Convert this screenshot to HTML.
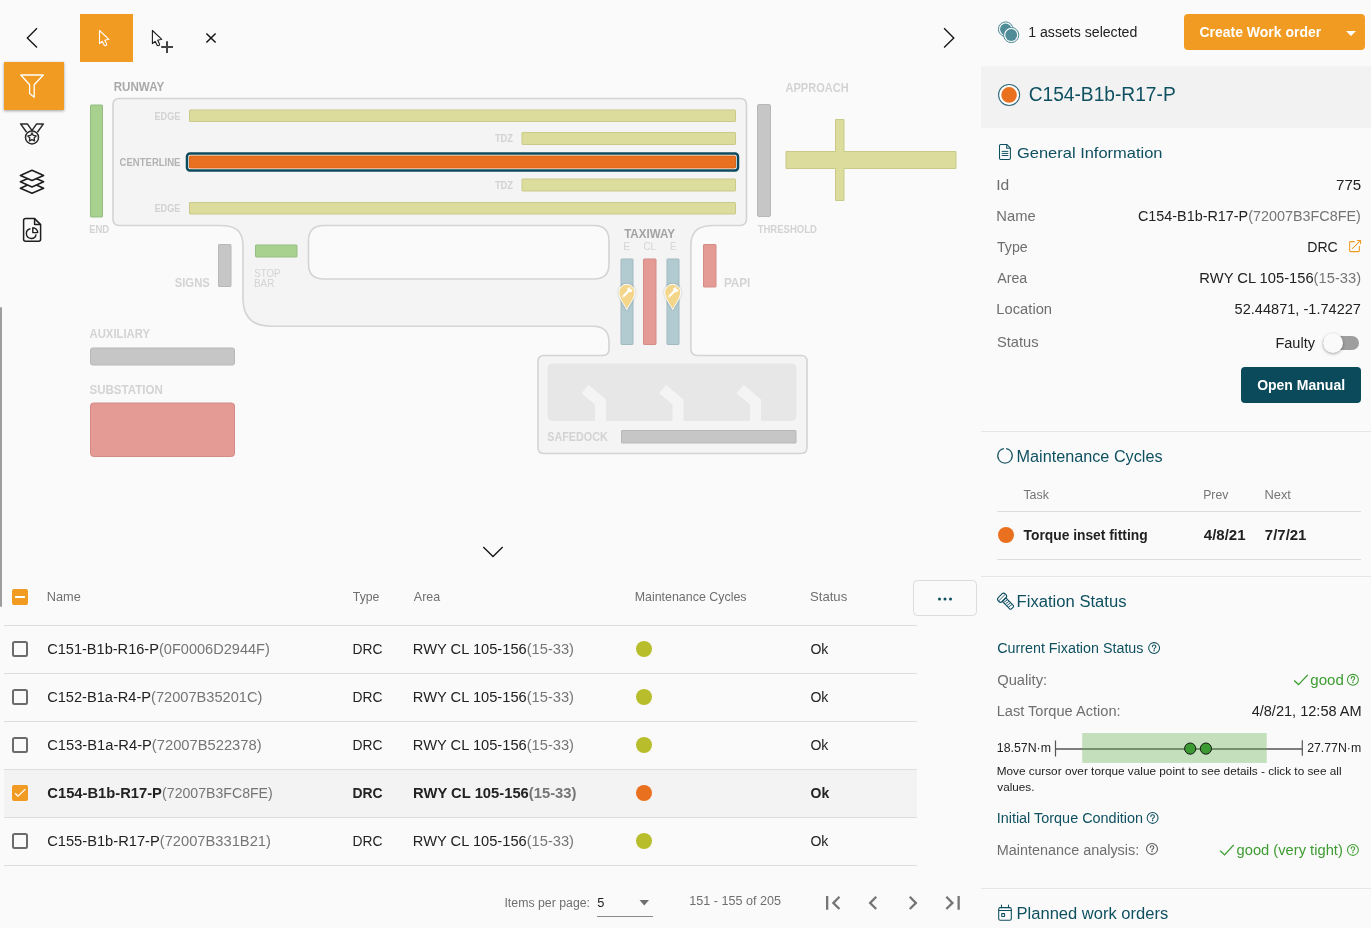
<!DOCTYPE html>
<html><head><meta charset="utf-8">
<style>
html,body{margin:0;padding:0;background:#fafafa;width:1371px;height:928px;overflow:hidden;}
svg{display:block;font-family:"Liberation Sans",sans-serif;}
.sub{fill:#757575;}
</style></head>
<body>
<div style="will-change:transform;width:1371px;height:928px">
<svg width="1371" height="928" viewBox="0 0 1371 928">
<rect x="0" y="0" width="1371" height="928" fill="#fafafa"/>


<!-- ============ LEFT SIDEBAR ============ -->
<path d="M37 28.2 L27.3 37.9 L37 47.6" fill="none" stroke="#151515" stroke-width="1.35"/>
<rect x="4" y="62" width="60" height="48" fill="#f19b22" style="filter:drop-shadow(0 1px 1.5px rgba(0,0,0,.35))"/>
<!-- funnel -->
<path d="M20.8 75 H43.3 L34.2 84.8 V97.2 L29.6 93.6 V84.8 Z" fill="none" stroke="#fff" stroke-width="1.3" stroke-linejoin="round"/>
<!-- medal -->
<g fill="none" stroke="#2a2a2a" stroke-width="1.5" stroke-linejoin="round">
<path d="M26.6 132.2 L20.6 123.9 H27.4 L32 130.6 L36.6 123.9 H43.4 L37.4 132.2"/>
<circle cx="32" cy="137.4" r="6.5"/>
<path d="M32.00 132.90 L33.32 135.48 L36.18 135.94 L34.14 138.00 L34.59 140.86 L32.00 139.55 L29.41 140.86 L29.86 138.00 L27.82 135.94 L30.68 135.48 Z" stroke-width="1.3"/>
</g>
<!-- layers -->
<g fill="#fafafa" stroke="#1e1e1e" stroke-width="1.6" stroke-linejoin="round">
<path d="M32 183.1 L43.6 188.2 L32 193.3 L20.4 188.2 Z"/>
<path d="M32 176.7 L43.6 181.8 L32 186.9 L20.4 181.8 Z"/>
<path d="M32 170.3 L43.6 175.4 L32 180.5 L20.4 175.4 Z"/>
</g>
<!-- doc chart -->
<g fill="none" stroke="#1e1e1e" stroke-width="1.5" stroke-linejoin="round">
<path d="M25.6 218.6 H34.6 L40.6 224.6 V239.2 Q40.6 241.2 38.6 241.2 H25.6 Q23.6 241.2 23.6 239.2 V220.6 Q23.6 218.6 25.6 218.6 Z"/>
<path d="M34.6 218.6 V224.6 H40.6"/>
<path d="M30.45 228.7 A4.9 4.9 0 1 0 36.1 234.3" stroke-width="1.4"/>
<path d="M32.8 227.7 V232.6 H37.7 A4.9 4.9 0 0 0 32.8 227.7 Z" stroke-width="1.4"/>
</g>
<!-- scrollbar -->
<rect x="0" y="307" width="2" height="300" rx="1" fill="#9e9e9e"/>

<!-- ============ TOOLBAR ============ -->
<rect x="80" y="14" width="53" height="48" fill="#f19b22"/>
<path d="M99.5 30.5 V43.6 L102.2 41.3 L104.2 45.2 Q104.8 46 105.6 45.6 L106.3 45.2 Q106.9 44.8 106.6 44.1 L104.8 40.3 L108.9 39.3 Z" fill="none" stroke="#fff" stroke-width="1.1" stroke-linejoin="round"/>
<path d="M152.4 30.5 V43.6 L155.1 41.3 L157.1 45.2 Q157.7 46 158.5 45.6 L159.2 45.2 Q159.8 44.8 159.5 44.1 L157.7 40.3 L161.8 39.3 Z" fill="none" stroke="#1a1a1a" stroke-width="1.1" stroke-linejoin="round"/>
<path d="M167 41.2 V53 M161.2 47 H173" stroke="#444" stroke-width="2"/>
<path d="M206.4 33.4 L215.6 42.6 M215.6 33.4 L206.4 42.6" stroke="#111" stroke-width="1.45"/>
<path d="M944.1 28.2 L953.8 37.9 L944.1 47.6" fill="none" stroke="#151515" stroke-width="1.35"/>

<!-- ============ DIAGRAM ============ -->
<!-- main runway/taxiway shape -->
<path d="M119 98.5 H740 Q746.5 98.5 746.5 105 V219 Q746.5 225.5 740 225.5 H714 C698 225.5 690.9 231 690.9 246 V349 Q690.9 355.5 697.4 355.5 H801 Q807 355.5 807 361.5 V447.5 Q807 453.5 801 453.5 H544 Q538 453.5 538 447.5 V361.5 Q538 355.5 544 355.5 H603 Q609 355.5 609 349 V342 Q609 326.3 593 326.3 H271 Q243 326.3 243 298 V246 C243 231 236 225.5 220 225.5 H119 Q113 225.5 113 219 V105 Q113 98.5 119 98.5 Z" fill="#f4f4f4" stroke="#d4d4d4" stroke-width="1.6"/>
<!-- inner hole -->
<path d="M324 225.5 H594 Q609 225.5 609 241 V264 Q609 279 594 279 H324 Q308.5 279 308.5 264 V241 Q308.5 225.5 324 225.5 Z" fill="#fafafa" stroke="#d4d4d4" stroke-width="1.6"/>

<!-- runway bars -->
<g fill="#dcdc9c" stroke="#c9ca8a" stroke-width="1">
<rect x="189.5" y="110" width="546" height="11.5" rx="0.6"/>
<rect x="522" y="132.5" width="213.5" height="12" rx="0.6"/>
<rect x="522" y="179" width="213.5" height="12" rx="0.6"/>
<rect x="189.5" y="202.5" width="546" height="11.5" rx="0.6"/>
</g>
<rect x="187" y="153.5" width="551" height="17" rx="3" fill="#fff" stroke="#0c4a5b" stroke-width="2.5"/>
<rect x="189.5" y="156" width="546" height="12" rx="0.6" fill="#e8701e" stroke="#d8661a" stroke-width="1"/>
<!-- end bar -->
<rect x="90.5" y="105" width="12" height="112" rx="0.6" fill="#a8d18f" stroke="#95bd82" stroke-width="1"/>
<!-- threshold -->
<rect x="757.5" y="104.5" width="13" height="112" rx="1.5" fill="#c6c6c6" stroke="#b8b8b8" stroke-width="1"/>
<!-- approach -->
<path d="M835.5 119.5 H844 V151.5 H956 V168.5 H844 V200.5 H835.5 V168.5 H786 V151.5 H835.5 Z" fill="#dcdd9c" stroke="#c9ca8a" stroke-width="1"/>
<!-- signs -->
<rect x="218.5" y="244.5" width="12.5" height="42" rx="0.6" fill="#c6c6c6" stroke="#b8b8b8" stroke-width="1"/>
<!-- stop bar -->
<rect x="255.5" y="245" width="41.5" height="12" rx="0.6" fill="#a8d18f" stroke="#95bd82" stroke-width="1"/>
<!-- taxiway bars -->
<rect x="621" y="259" width="12" height="85.5" rx="0.6" fill="#b2cbd0" stroke="#a1b9bf" stroke-width="1"/>
<rect x="643.5" y="259" width="12.5" height="85.5" rx="0.6" fill="#e49a95" stroke="#d48b86" stroke-width="1"/>
<rect x="667" y="259" width="12" height="85.5" rx="0.6" fill="#b2cbd0" stroke="#a1b9bf" stroke-width="1"/>
<!-- papi -->
<rect x="703.5" y="244.5" width="12.5" height="42.5" rx="0.6" fill="#e49a95" stroke="#d48b86" stroke-width="1"/>
<!-- auxiliary -->
<rect x="90.5" y="348" width="144" height="17" rx="2" fill="#c6c6c6" stroke="#b8b8b8" stroke-width="1"/>
<!-- substation -->
<rect x="90.5" y="403" width="144" height="53.5" rx="3" fill="#e49a95" stroke="#d48b86" stroke-width="1"/>
<!-- safedock -->
<rect x="547.5" y="363.5" width="249" height="57.5" rx="5" fill="#e6e7e6"/>
<g fill="none" stroke="#f4f4f4" stroke-width="11" stroke-linejoin="miter">
<path d="M585 389 L600.5 402 V421"/>
<path d="M662.5 389 L678 402 V421"/>
<path d="M740 389 L755.5 402 V421"/>
</g>
<rect x="621.5" y="430.5" width="174.5" height="12.5" rx="0.6" fill="#c6c6c6" stroke="#b8b8b8" stroke-width="1"/>

<!-- pins -->
<g style="filter:drop-shadow(0 0.5px 1.2px rgba(0,0,0,.22))">
<path d="M626.80 309.6 C624.50 304.5 618.80 298.5 618.80 292.3 A8 8 0 0 1 634.80 292.3 C634.80 298.5 629.10 304.5 626.80 309.6 Z" fill="#f4d68a" stroke="#fff" stroke-width="1"/>
<path d="M672.70 309.6 C670.40 304.5 664.70 298.5 664.70 292.3 A8 8 0 0 1 680.70 292.3 C680.70 298.5 675.00 304.5 672.70 309.6 Z" fill="#f4d68a" stroke="#fff" stroke-width="1"/>
</g>
<path d="M623.20 296.4 L628.40 291.2" stroke="#fff" stroke-width="2.1" stroke-linecap="round"/>
<circle cx="629.80" cy="289.8" r="2.5" fill="#fff"/>
<circle cx="631.20" cy="288.3" r="1.15" fill="#f4d68a"/>
<circle cx="623.30" cy="296.3" r="0.5" fill="#f4d68a"/>
<path d="M669.10 296.4 L674.30 291.2" stroke="#fff" stroke-width="2.1" stroke-linecap="round"/>
<circle cx="675.70" cy="289.8" r="2.5" fill="#fff"/>
<circle cx="677.10" cy="288.3" r="1.15" fill="#f4d68a"/>
<circle cx="669.20" cy="296.3" r="0.5" fill="#f4d68a"/>

<!-- diagram labels -->

<!-- down chevron -->
<path d="M483.3 547 L493 556.5 L502.7 547" fill="none" stroke="#151515" stroke-width="1.35"/>

<!-- ============ TABLE ============ -->
<rect x="12" y="589" width="16" height="16" rx="2" fill="#f19b22"/>
<rect x="15" y="596" width="10" height="2" fill="#fff"/>
<rect x="913.5" y="580.5" width="63" height="35" rx="4" fill="#fafafa" stroke="#dcdcdc" stroke-width="1"/>
<g fill="#0e4f5f"><circle cx="939.5" cy="599" r="1.5"/><circle cx="945" cy="599" r="1.5"/><circle cx="950.5" cy="599" r="1.5"/></g>

<g stroke="#dedede" stroke-width="1">
<line x1="4" y1="625.5" x2="917" y2="625.5"/>
<line x1="4" y1="673.5" x2="917" y2="673.5"/>
<line x1="4" y1="721.5" x2="917" y2="721.5"/>
<line x1="4" y1="817.5" x2="917" y2="817.5"/>
<line x1="4" y1="865.5" x2="917" y2="865.5"/>
</g>
<rect x="4" y="770" width="913" height="47" fill="#f3f3f3"/>
<line x1="4" y1="769.5" x2="917" y2="769.5" stroke="#dedede" stroke-width="1"/>

<g fill="none" stroke="#6b6b6b" stroke-width="2">
<rect x="13" y="642" width="14" height="14" rx="1.5"/>
<rect x="13" y="690" width="14" height="14" rx="1.5"/>
<rect x="13" y="738" width="14" height="14" rx="1.5"/>
<rect x="13" y="834" width="14" height="14" rx="1.5"/>
</g>
<rect x="12" y="785" width="16" height="16" rx="2" fill="#f19b22"/>
<path d="M15.1 793.3 L17.9 796.2 L25.4 789.1" fill="none" stroke="#fff" stroke-width="1.3"/>

<g fill="#b8bd2b">
<circle cx="644" cy="649" r="8"/>
<circle cx="644" cy="697" r="8"/>
<circle cx="644" cy="745" r="8"/>
<circle cx="644" cy="841" r="8"/>
</g>
<circle cx="644" cy="793" r="8" fill="#e8701e"/>

<!-- pagination -->
<line x1="597" y1="916.5" x2="653" y2="916.5" stroke="#8a8a8a" stroke-width="1"/>
<path d="M639.5 900 H649 L644.25 905.5 Z" fill="#6f6f6f"/>
<g fill="#757575">
<path transform="translate(819.1 889.1) scale(1.15)" d="M18.41 16.59L13.82 12l4.59-4.59L17 6l-6 6 6 6zM6 6h2v12H6z"/>
<path transform="translate(859.3 889.1) scale(1.15)" d="M15.41 7.41L14 6l-6 6 6 6 1.41-1.41L10.83 12z"/>
<path transform="translate(899.1 889.1) scale(1.15)" d="M10 6L8.59 7.41 13.17 12l-4.58 4.59L10 18l6-6z"/>
<path transform="translate(939.1 889.1) scale(1.15)" d="M5.59 7.41L10.18 12l-4.59 4.59L7 18l6-6-6-6zM16 6h2v12h-2z"/>
</g>

<!-- ============ RIGHT PANEL ============ -->
<!-- assets icon -->
<g stroke="#4f8c98" stroke-width="1" >
<circle cx="1005.7" cy="29.2" r="7.3" fill="#fafafa"/>
<circle cx="1005.7" cy="29.2" r="5.6" fill="#4f8c98" stroke="none"/>
<circle cx="1011.2" cy="35" r="7.6" fill="#fafafa"/>
<circle cx="1011.2" cy="35" r="5.9" fill="#4f8c98" stroke="none"/>
</g>
<rect x="1184" y="14" width="181" height="36" rx="4" fill="#f19b22"/>
<path d="M1346 31 H1356 L1351 36 Z" fill="#fff"/>

<rect x="981" y="66" width="390" height="62" fill="#f2f2f2"/>
<circle cx="1009.1" cy="94.9" r="10.5" fill="#fff" stroke="#2f6878" stroke-width="1.05"/>
<circle cx="1009.1" cy="94.9" r="7.8" fill="#e8701e"/>

<!-- general info -->
<g fill="none" stroke="#0e4f5f" stroke-width="1.05" stroke-linejoin="round">
<path d="M1000.7 144.4 H1006.7 L1010.4 148.1 V158.2 Q1010.4 159.4 1009.2 159.4 H1000.7 Q999.5 159.4 999.5 158.2 V145.6 Q999.5 144.4 1000.7 144.4 Z"/>
<path d="M1006.7 144.4 V148.3 H1010.4"/>
<path d="M1002.1 151.4 H1007.9 M1002.1 153.45 H1007.9 M1002.1 155.5 H1007.9" stroke-width="0.95" stroke-linecap="round"/>
</g>

<g fill="none" stroke="#f09a24" stroke-width="1.05" stroke-linecap="round" stroke-linejoin="round">
<path d="M1354.4 241.6 H1350.6 Q1349.6 241.6 1349.6 242.6 V250.6 Q1349.6 251.6 1350.6 251.6 H1358.4 Q1359.4 251.6 1359.4 250.6 V246.3"/>
<path d="M1352.5 248.5 L1360.4 240.6 M1357.4 240.4 H1360.6 V243.6"/>
</g>
<rect x="1323" y="336" width="36" height="14" rx="7" fill="#9e9e9e"/>
<circle cx="1333" cy="343" r="10" fill="#fafafa" style="filter:drop-shadow(0 1px 1.5px rgba(0,0,0,.35))"/>
<rect x="1241" y="367" width="120" height="36" rx="4" fill="#0b4a5a"/>

<line x1="981" y1="431.5" x2="1371" y2="431.5" stroke="#e6e6e6" stroke-width="1"/>

<!-- maintenance cycles -->
<path d="M1006.10 448.63 A7.25 7.25 0 1 1 1003.90 448.63" fill="none" stroke="#1f5a69" stroke-width="1.25"/>
<line x1="997" y1="511.5" x2="1361" y2="511.5" stroke="#dcdcdc" stroke-width="1"/>
<circle cx="1006" cy="535" r="8" fill="#e8701e"/>
<line x1="997" y1="559.5" x2="1361" y2="559.5" stroke="#dcdcdc" stroke-width="1"/>
<line x1="981" y1="576.5" x2="1371" y2="576.5" stroke="#e6e6e6" stroke-width="1"/>

<!-- fixation status -->
<g transform="translate(1002.3 597.9) rotate(45)" fill="none" stroke="#0e4f5f" stroke-width="1.1" stroke-linejoin="round">
<rect x="-3.1" y="-4.9" width="5.6" height="9.8" rx="2.3"/>
<path d="M-0.4 -4.6 V4.6" stroke-width="0.8"/>
<path d="M2.5 -2.5 H13 Q14.2 -2.5 14.2 -1.3 V1.3 Q14.2 2.5 13 2.5 H2.5 Z"/>
<path d="M5 -2.3 L4.2 2.3 M7.2 -2.3 L6.4 2.3 M9.4 -2.3 L8.6 2.3 M11.6 -2.3 L10.8 2.3" stroke-width="0.8"/>
</g>


<line x1="1055.5" y1="749" x2="1302" y2="749" stroke="#555" stroke-width="1.3"/>
<rect x="1082.2" y="733" width="184.5" height="29.9" fill="rgb(99,176,77)" fill-opacity="0.364"/>
<line x1="1055.5" y1="740.5" x2="1055.5" y2="756.5" stroke="#555" stroke-width="1.2"/>
<line x1="1302.3" y1="740.3" x2="1302.3" y2="755.8" stroke="#555" stroke-width="1.2"/>
<circle cx="1190.2" cy="748.6" r="5.6" fill="#3c9b32" stroke="#151515" stroke-width="1"/>
<circle cx="1205.9" cy="748.6" r="5.6" fill="#3c9b32" stroke="#151515" stroke-width="1"/>



<g fill="none" stroke="#0e5060" stroke-width="1.05">
<circle cx="1154.1" cy="648.1" r="5.45"/>
<path d="M1152.35 646.80 Q1152.35 644.90 1154.10 644.90 Q1155.90 644.90 1155.90 646.60 Q1155.90 647.70 1154.50 648.40 Q1154.10 648.60 1154.10 649.20" stroke-linecap="round"/>
</g>
<circle cx="1154.1" cy="650.70" r="0.75" fill="#0e5060"/>
<g fill="none" stroke="#3c9c30" stroke-width="1.05">
<circle cx="1352.9" cy="679.8" r="5.45"/>
<path d="M1351.15 678.50 Q1351.15 676.60 1352.90 676.60 Q1354.70 676.60 1354.70 678.30 Q1354.70 679.40 1353.30 680.10 Q1352.90 680.30 1352.90 680.90" stroke-linecap="round"/>
</g>
<circle cx="1352.9" cy="682.40" r="0.75" fill="#3c9c30"/>
<g fill="none" stroke="#0e5060" stroke-width="1.05">
<circle cx="1152.6" cy="817.9" r="5.45"/>
<path d="M1150.85 816.60 Q1150.85 814.70 1152.60 814.70 Q1154.40 814.70 1154.40 816.40 Q1154.40 817.50 1153.00 818.20 Q1152.60 818.40 1152.60 819.00" stroke-linecap="round"/>
</g>
<circle cx="1152.6" cy="820.50" r="0.75" fill="#0e5060"/>
<g fill="none" stroke="#555" stroke-width="1.05">
<circle cx="1152.0" cy="848.9" r="5.45"/>
<path d="M1150.25 847.60 Q1150.25 845.70 1152.00 845.70 Q1153.80 845.70 1153.80 847.40 Q1153.80 848.50 1152.40 849.20 Q1152.00 849.40 1152.00 850.00" stroke-linecap="round"/>
</g>
<circle cx="1152.0" cy="851.50" r="0.75" fill="#555"/>
<g fill="none" stroke="#3c9c30" stroke-width="1.05">
<circle cx="1352.9" cy="849.9" r="5.45"/>
<path d="M1351.15 848.60 Q1351.15 846.70 1352.90 846.70 Q1354.70 846.70 1354.70 848.40 Q1354.70 849.50 1353.30 850.20 Q1352.90 850.40 1352.90 851.00" stroke-linecap="round"/>
</g>
<circle cx="1352.9" cy="852.50" r="0.75" fill="#3c9c30"/>
<path d="M1294.2 680.5 L1298.5 684.6 L1307.8 674.9" fill="none" stroke="#3c9c30" stroke-width="1.35"/>
<path d="M1220.2 850.8 L1224.6 854.9 L1233.7 844.9" fill="none" stroke="#3c9c30" stroke-width="1.35"/>
<line x1="981" y1="888.5" x2="1371" y2="888.5" stroke="#e6e6e6" stroke-width="1"/>
<!-- calendar -->
<g fill="none" stroke="#0e4f5f" stroke-width="1.05">
<rect x="998.7" y="907.6" width="12.6" height="12.7" rx="1.6"/>
<path d="M998.7 910.5 H1011.3 M1001.5 905.1 V907.6 M1008.5 905.1 V907.6" stroke-linecap="round"/>
<rect x="1001.7" y="913.6" width="2.9" height="2.9" rx="0.3"/>
</g>


<text x="113.72" y="91.20" font-size="11.93" font-weight="bold" fill="#a9a9a9" textLength="50.49" lengthAdjust="spacingAndGlyphs">RUNWAY</text>
<text x="154.48" y="119.70" font-size="10.76" font-weight="bold" fill="#d3d3d3" textLength="25.98" lengthAdjust="spacingAndGlyphs">EDGE</text>
<text x="119.62" y="165.90" font-size="10.47" font-weight="bold" fill="#b3b3b3" textLength="60.86" lengthAdjust="spacingAndGlyphs">CENTERLINE</text>
<text x="154.48" y="211.90" font-size="10.76" font-weight="bold" fill="#d3d3d3" textLength="25.98" lengthAdjust="spacingAndGlyphs">EDGE</text>
<text x="494.91" y="142.40" font-size="11.05" font-weight="bold" fill="#d3d3d3" textLength="18.16" lengthAdjust="spacingAndGlyphs">TDZ</text>
<text x="494.91" y="189.00" font-size="11.05" font-weight="bold" fill="#d3d3d3" textLength="18.16" lengthAdjust="spacingAndGlyphs">TDZ</text>
<text x="89.16" y="233.00" font-size="10.62" font-weight="bold" fill="#d3d3d3" textLength="20.03" lengthAdjust="spacingAndGlyphs">END</text>
<text x="785.52" y="92.00" font-size="12.80" font-weight="bold" fill="#d3d3d3" textLength="63.22" lengthAdjust="spacingAndGlyphs">APPROACH</text>
<text x="757.71" y="233.40" font-size="11.20" font-weight="bold" fill="#d3d3d3" textLength="59.10" lengthAdjust="spacingAndGlyphs">THRESHOLD</text>
<text x="624.18" y="237.60" font-size="12.65" font-weight="bold" fill="#a3a3a3" textLength="50.72" lengthAdjust="spacingAndGlyphs">TAXIWAY</text>
<text x="623.35" y="250.10" font-size="10.47" fill="#d5d5d5" textLength="6.89" lengthAdjust="spacingAndGlyphs">E</text>
<text x="643.41" y="250.10" font-size="10.47" fill="#d5d5d5" textLength="12.52" lengthAdjust="spacingAndGlyphs">CL</text>
<text x="669.94" y="250.10" font-size="10.47" fill="#d5d5d5" textLength="6.15" lengthAdjust="spacingAndGlyphs">E</text>
<text x="174.66" y="287.00" font-size="13.24" font-weight="bold" fill="#d3d3d3" textLength="35.18" lengthAdjust="spacingAndGlyphs">SIGNS</text>
<text x="254.26" y="276.90" font-size="11.49" fill="#d3d3d3" textLength="26.24" lengthAdjust="spacingAndGlyphs">STOP</text>
<text x="253.88" y="286.50" font-size="10.47" fill="#d3d3d3" textLength="20.48" lengthAdjust="spacingAndGlyphs">BAR</text>
<text x="723.91" y="287.00" font-size="11.93" font-weight="bold" fill="#d3d3d3" textLength="26.37" lengthAdjust="spacingAndGlyphs">PAPI</text>
<text x="89.52" y="338.20" font-size="13.38" font-weight="bold" fill="#d3d3d3" textLength="60.58" lengthAdjust="spacingAndGlyphs">AUXILIARY</text>
<text x="89.45" y="394.30" font-size="13.24" font-weight="bold" fill="#d3d3d3" textLength="73.32" lengthAdjust="spacingAndGlyphs">SUBSTATION</text>
<text x="547.18" y="441.10" font-size="12.65" font-weight="bold" fill="#d3d3d3" textLength="60.72" lengthAdjust="spacingAndGlyphs">SAFEDOCK</text>
<text x="46.75" y="601.00" font-size="13.09" fill="#6f6f6f" textLength="34.10" lengthAdjust="spacingAndGlyphs">Name</text>
<text x="352.82" y="600.90" font-size="12.95" fill="#6f6f6f" textLength="26.60" lengthAdjust="spacingAndGlyphs">Type</text>
<text x="413.87" y="600.90" font-size="12.95" fill="#6f6f6f" textLength="26.33" lengthAdjust="spacingAndGlyphs">Area</text>
<text x="634.68" y="600.90" font-size="12.36" fill="#6f6f6f" textLength="111.86" lengthAdjust="spacingAndGlyphs">Maintenance Cycles</text>
<text x="810.01" y="601.00" font-size="13.24" fill="#6f6f6f" textLength="37.25" lengthAdjust="spacingAndGlyphs">Status</text>
<text x="47.17" y="653.80" font-size="14.62" fill="#222" textLength="222.72" lengthAdjust="spacingAndGlyphs">C151-B1b-R16-P<tspan class="sub">(0F0006D2944F)</tspan></text>
<text x="352.61" y="653.80" font-size="14.62" fill="#222" textLength="29.95" lengthAdjust="spacingAndGlyphs">DRC</text>
<text x="412.89" y="653.80" font-size="14.62" fill="#222" textLength="161.09" lengthAdjust="spacingAndGlyphs">RWY CL 105-156<tspan class="sub">(15-33)</tspan></text>
<text x="810.43" y="653.80" font-size="14.41" fill="#222" textLength="17.97" lengthAdjust="spacingAndGlyphs">Ok</text>
<text x="47.17" y="701.80" font-size="14.62" fill="#222" textLength="215.23" lengthAdjust="spacingAndGlyphs">C152-B1a-R4-P<tspan class="sub">(72007B35201C)</tspan></text>
<text x="352.61" y="701.80" font-size="14.62" fill="#222" textLength="29.95" lengthAdjust="spacingAndGlyphs">DRC</text>
<text x="412.89" y="701.80" font-size="14.62" fill="#222" textLength="161.09" lengthAdjust="spacingAndGlyphs">RWY CL 105-156<tspan class="sub">(15-33)</tspan></text>
<text x="810.43" y="701.80" font-size="14.41" fill="#222" textLength="17.97" lengthAdjust="spacingAndGlyphs">Ok</text>
<text x="47.16" y="749.80" font-size="14.62" fill="#222" textLength="214.42" lengthAdjust="spacingAndGlyphs">C153-B1a-R4-P<tspan class="sub">(72007B522378)</tspan></text>
<text x="352.61" y="749.80" font-size="14.62" fill="#222" textLength="29.95" lengthAdjust="spacingAndGlyphs">DRC</text>
<text x="412.89" y="749.80" font-size="14.62" fill="#222" textLength="161.09" lengthAdjust="spacingAndGlyphs">RWY CL 105-156<tspan class="sub">(15-33)</tspan></text>
<text x="810.43" y="749.80" font-size="14.41" fill="#222" textLength="17.97" lengthAdjust="spacingAndGlyphs">Ok</text>
<text x="47.31" y="797.80" font-size="14.62" font-weight="bold" fill="#222" textLength="114.61" lengthAdjust="spacingAndGlyphs">C154-B1b-R17-P</text>
<text x="162.12" y="797.80" font-size="14.62" fill="#757575" textLength="110.62" lengthAdjust="spacingAndGlyphs">(72007B3FC8FE)</text>
<text x="352.56" y="797.80" font-size="14.62" font-weight="bold" fill="#222" textLength="30.11" lengthAdjust="spacingAndGlyphs">DRC</text>
<text x="413.10" y="797.80" font-size="14.62" font-weight="bold" fill="#222" textLength="163.36" lengthAdjust="spacingAndGlyphs">RWY CL 105-156<tspan class="sub">(15-33)</tspan></text>
<text x="810.54" y="797.80" font-size="14.41" font-weight="bold" fill="#222" textLength="18.65" lengthAdjust="spacingAndGlyphs">Ok</text>
<text x="47.17" y="845.80" font-size="14.62" fill="#222" textLength="223.71" lengthAdjust="spacingAndGlyphs">C155-B1b-R17-P<tspan class="sub">(72007B331B21)</tspan></text>
<text x="352.61" y="845.80" font-size="14.62" fill="#222" textLength="29.95" lengthAdjust="spacingAndGlyphs">DRC</text>
<text x="412.89" y="845.80" font-size="14.62" fill="#222" textLength="161.09" lengthAdjust="spacingAndGlyphs">RWY CL 105-156<tspan class="sub">(15-33)</tspan></text>
<text x="810.43" y="845.80" font-size="14.41" fill="#222" textLength="17.97" lengthAdjust="spacingAndGlyphs">Ok</text>
<text x="504.46" y="906.90" font-size="13.09" fill="#6f6f6f" textLength="85.56" lengthAdjust="spacingAndGlyphs">Items per page:</text>
<text x="597.29" y="906.90" font-size="12.51" fill="#222" textLength="7.14" lengthAdjust="spacingAndGlyphs">5</text>
<text x="689.25" y="905.30" font-size="12.36" fill="#6f6f6f" textLength="91.87" lengthAdjust="spacingAndGlyphs">151 - 155 of 205</text>
<text x="1028.24" y="37.20" font-size="14.84" fill="#222" textLength="109.07" lengthAdjust="spacingAndGlyphs">1 assets selected</text>
<text x="1199.44" y="37.00" font-size="14.84" font-weight="bold" fill="#fff" textLength="121.76" lengthAdjust="spacingAndGlyphs">Create Work order</text>
<text x="1028.64" y="101.00" font-size="19.64" fill="#0e5060" textLength="147.08" lengthAdjust="spacingAndGlyphs">C154-B1b-R17-P</text>
<text x="1016.98" y="157.60" font-size="15.42" fill="#0e5060" textLength="145.56" lengthAdjust="spacingAndGlyphs">General Information</text>
<text x="996.15" y="190.10" font-size="15.13" fill="#6f6f6f" textLength="13.05" lengthAdjust="spacingAndGlyphs">Id</text>
<text x="996.38" y="220.90" font-size="14.40" fill="#6f6f6f" textLength="39.34" lengthAdjust="spacingAndGlyphs">Name</text>
<text x="996.98" y="252.20" font-size="14.84" fill="#6f6f6f" textLength="30.73" lengthAdjust="spacingAndGlyphs">Type</text>
<text x="997.26" y="283.10" font-size="14.69" fill="#6f6f6f" textLength="30.03" lengthAdjust="spacingAndGlyphs">Area</text>
<text x="996.39" y="314.20" font-size="14.69" fill="#6f6f6f" textLength="55.65" lengthAdjust="spacingAndGlyphs">Location</text>
<text x="996.94" y="347.20" font-size="14.40" fill="#6f6f6f" textLength="41.57" lengthAdjust="spacingAndGlyphs">Status</text>
<text x="1336.05" y="190.20" font-size="14.98" fill="#222" textLength="25.17" lengthAdjust="spacingAndGlyphs">775</text>
<text x="1137.98" y="220.90" font-size="14.55" fill="#222" textLength="222.88" lengthAdjust="spacingAndGlyphs">C154-B1b-R17-P<tspan class="sub">(72007B3FC8FE)</tspan></text>
<text x="1307.24" y="252.00" font-size="14.55" fill="#222" textLength="30.47" lengthAdjust="spacingAndGlyphs">DRC</text>
<text x="1199.39" y="282.90" font-size="14.55" fill="#222" textLength="161.70" lengthAdjust="spacingAndGlyphs">RWY CL 105-156<tspan class="sub">(15-33)</tspan></text>
<text x="1234.62" y="314.00" font-size="14.69" fill="#222" textLength="126.34" lengthAdjust="spacingAndGlyphs">52.44871, -1.74227</text>
<text x="1275.40" y="347.90" font-size="14.25" fill="#222" textLength="39.55" lengthAdjust="spacingAndGlyphs">Faulty</text>
<text x="1257.14" y="389.80" font-size="14.55" font-weight="bold" fill="#fff" textLength="87.96" lengthAdjust="spacingAndGlyphs">Open Manual</text>
<text x="1016.56" y="462.20" font-size="16.29" fill="#0e5060" textLength="146.00" lengthAdjust="spacingAndGlyphs">Maintenance Cycles</text>
<text x="1023.42" y="498.80" font-size="12.51" fill="#757575" textLength="25.49" lengthAdjust="spacingAndGlyphs">Task</text>
<text x="1203.19" y="498.80" font-size="12.51" fill="#757575" textLength="25.15" lengthAdjust="spacingAndGlyphs">Prev</text>
<text x="1264.44" y="498.80" font-size="12.51" fill="#757575" textLength="26.47" lengthAdjust="spacingAndGlyphs">Next</text>
<text x="1023.56" y="539.90" font-size="14.69" font-weight="bold" fill="#222" textLength="124.05" lengthAdjust="spacingAndGlyphs">Torque inset fitting</text>
<text x="1203.77" y="540.00" font-size="14.40" font-weight="bold" fill="#222" textLength="41.85" lengthAdjust="spacingAndGlyphs">4/8/21</text>
<text x="1264.86" y="540.00" font-size="14.40" font-weight="bold" fill="#222" textLength="41.55" lengthAdjust="spacingAndGlyphs">7/7/21</text>
<text x="1016.63" y="607.00" font-size="16.00" fill="#0e5060" textLength="109.84" lengthAdjust="spacingAndGlyphs">Fixation Status</text>
<text x="997.18" y="653.10" font-size="14.55" fill="#0e5060" textLength="146.31" lengthAdjust="spacingAndGlyphs">Current Fixation Status</text>
<text x="997.20" y="685.20" font-size="14.40" fill="#6f6f6f" textLength="49.93" lengthAdjust="spacingAndGlyphs">Quality:</text>
<text x="1310.26" y="685.00" font-size="14.34" fill="#3c9c30" textLength="33.51" lengthAdjust="spacingAndGlyphs">good</text>
<text x="996.70" y="715.70" font-size="13.82" fill="#6f6f6f" textLength="123.92" lengthAdjust="spacingAndGlyphs">Last Torque Action:</text>
<text x="1251.67" y="716.00" font-size="14.40" fill="#222" textLength="109.95" lengthAdjust="spacingAndGlyphs">4/8/21, 12:58 AM</text>
<text x="996.77" y="752.00" font-size="12.65" fill="#222" textLength="54.24" lengthAdjust="spacingAndGlyphs">18.57N·m</text>
<text x="1307.18" y="751.60" font-size="11.90" fill="#222" textLength="54.02" lengthAdjust="spacingAndGlyphs">27.77N·m</text>
<text x="996.73" y="774.90" font-size="11.05" fill="#222" textLength="344.87" lengthAdjust="spacingAndGlyphs">Move cursor over torque value point to see details - click to see all</text>
<text x="997.37" y="791.00" font-size="10.90" fill="#222" textLength="37.10" lengthAdjust="spacingAndGlyphs">values.</text>
<text x="996.67" y="822.80" font-size="14.25" fill="#0e5060" textLength="146.44" lengthAdjust="spacingAndGlyphs">Initial Torque Condition</text>
<text x="996.81" y="854.80" font-size="13.82" fill="#6f6f6f" textLength="142.38" lengthAdjust="spacingAndGlyphs">Maintenance analysis:</text>
<text x="1236.58" y="854.80" font-size="13.86" fill="#3c9c30" textLength="106.22" lengthAdjust="spacingAndGlyphs">good (very tight)</text>
<text x="1016.54" y="918.90" font-size="15.85" fill="#0e5060" textLength="151.73" lengthAdjust="spacingAndGlyphs">Planned work orders</text>
</svg>
</div>
</body></html>
